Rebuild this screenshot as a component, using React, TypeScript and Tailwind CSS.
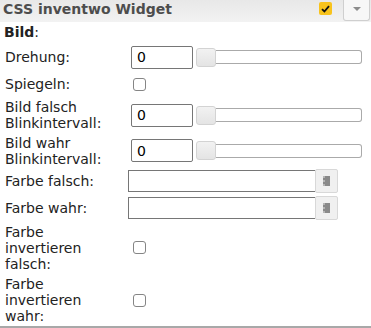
import type { ReactNode } from "react"

function Row({ label, h, children }: { label: ReactNode; h: string; children?: ReactNode }) {
    return (
        <div className={`flex items-center ${h}`}>
            <div className="w-[128px] shrink-0 pl-[5px] pr-[5px]">{label}</div>
            <div className="flex items-center">{children}</div>
        </div>
    )
}

function NumberField() {
    return (
        <div className="flex items-center">
            <div className="ml-[3px] w-[62px] h-[23px] border border-[#767676] rounded-[2px] pl-[5px] flex items-center text-[14px] text-black">0</div>
            <div className="ml-[3px] flex items-center">
                <div className="w-[20px] h-[19px] border border-[#d3d3d3] rounded-[3px] bg-gradient-to-b from-[#f2f2f2] to-[#e4e4e4]" />
                <div className="w-[146px] h-[14px] border border-l-0 border-[#aaa] rounded-r-[3px] bg-white" />
            </div>
        </div>
    )
}

function Check() {
    return <div className="ml-[5px] w-[13px] h-[13px] border border-[#858585] rounded-[3px] bg-white" />
}

function ColorField() {
    return (
        <div className="flex items-center">
            <div className="w-[187px] h-[22px] border border-r-0 border-[#767676] bg-white" />
            <div className="w-[23px] h-[24px] border border-[#d8d8d8] rounded-[2px] bg-[#f0f0f0] flex items-center justify-center">
                <div className="w-[7px] h-[10px] bg-[#8a8a8a] border-l-2 border-dotted border-[#b5b5b5]" />
            </div>
        </div>
    )
}

export default function App() {
    return (
        <div className="w-[371px] h-[328px] bg-white font-['DejaVu_Sans',sans-serif] text-[14px] leading-[16px] text-[#222] flex flex-col">
            <div className="h-[22px] flex items-start bg-gradient-to-b from-[#e8e8e8] to-[#f2f2f2]">
                <div className="pl-[3px] pt-[1px] font-bold text-[#4d4d4d] flex-1">CSS inventwo Widget</div>
                <div className="mt-[2px] w-[13px] h-[13px] rounded-[2px] bg-[#f8c31c] flex items-center justify-center">
                    <svg width="9" height="8" viewBox="0 0 9 8">
                        <path d="M1 4.2 L3.4 6.5 L8 1.2" stroke="#111" strokeWidth="1.8" fill="none" />
                    </svg>
                </div>
                <div className="ml-[11px] mr-[1px] w-[27px] h-[21px] border border-t-0 border-[#cfcfcf] rounded-b-[3px] bg-[#f7f7f7] flex items-center justify-center">
                    <div className="w-0 h-0 border-l-[4px] border-r-[4px] border-t-[4px] border-l-transparent border-r-transparent border-t-[#8c8c8c] -mt-[3px]" />
                </div>
            </div>
            <div className="h-[21px] pt-[2px] pl-[4px]">
                <span className="font-bold">Bild</span>:
            </div>
            <Row label="Drehung:" h="h-[28px]"><NumberField /></Row>
            <Row label="Spiegeln:" h="h-[26px]"><Check /></Row>
            <Row label="Bild falsch Blinkintervall:" h="h-[36px]"><NumberField /></Row>
            <Row label="Bild wahr Blinkintervall:" h="h-[35px]"><NumberField /></Row>
            <Row label="Farbe falsch:" h="h-[26px]"><ColorField /></Row>
            <Row label="Farbe wahr:" h="h-[27px]"><ColorField /></Row>
            <Row label="Farbe invertieren falsch:" h="h-[53px]"><Check /></Row>
            <Row label="Farbe invertieren wahr:" h="h-[52px]"><Check /></Row>
            <div className="border-b-2 border-[#a8a8a8]" />
        </div>
    )
}
